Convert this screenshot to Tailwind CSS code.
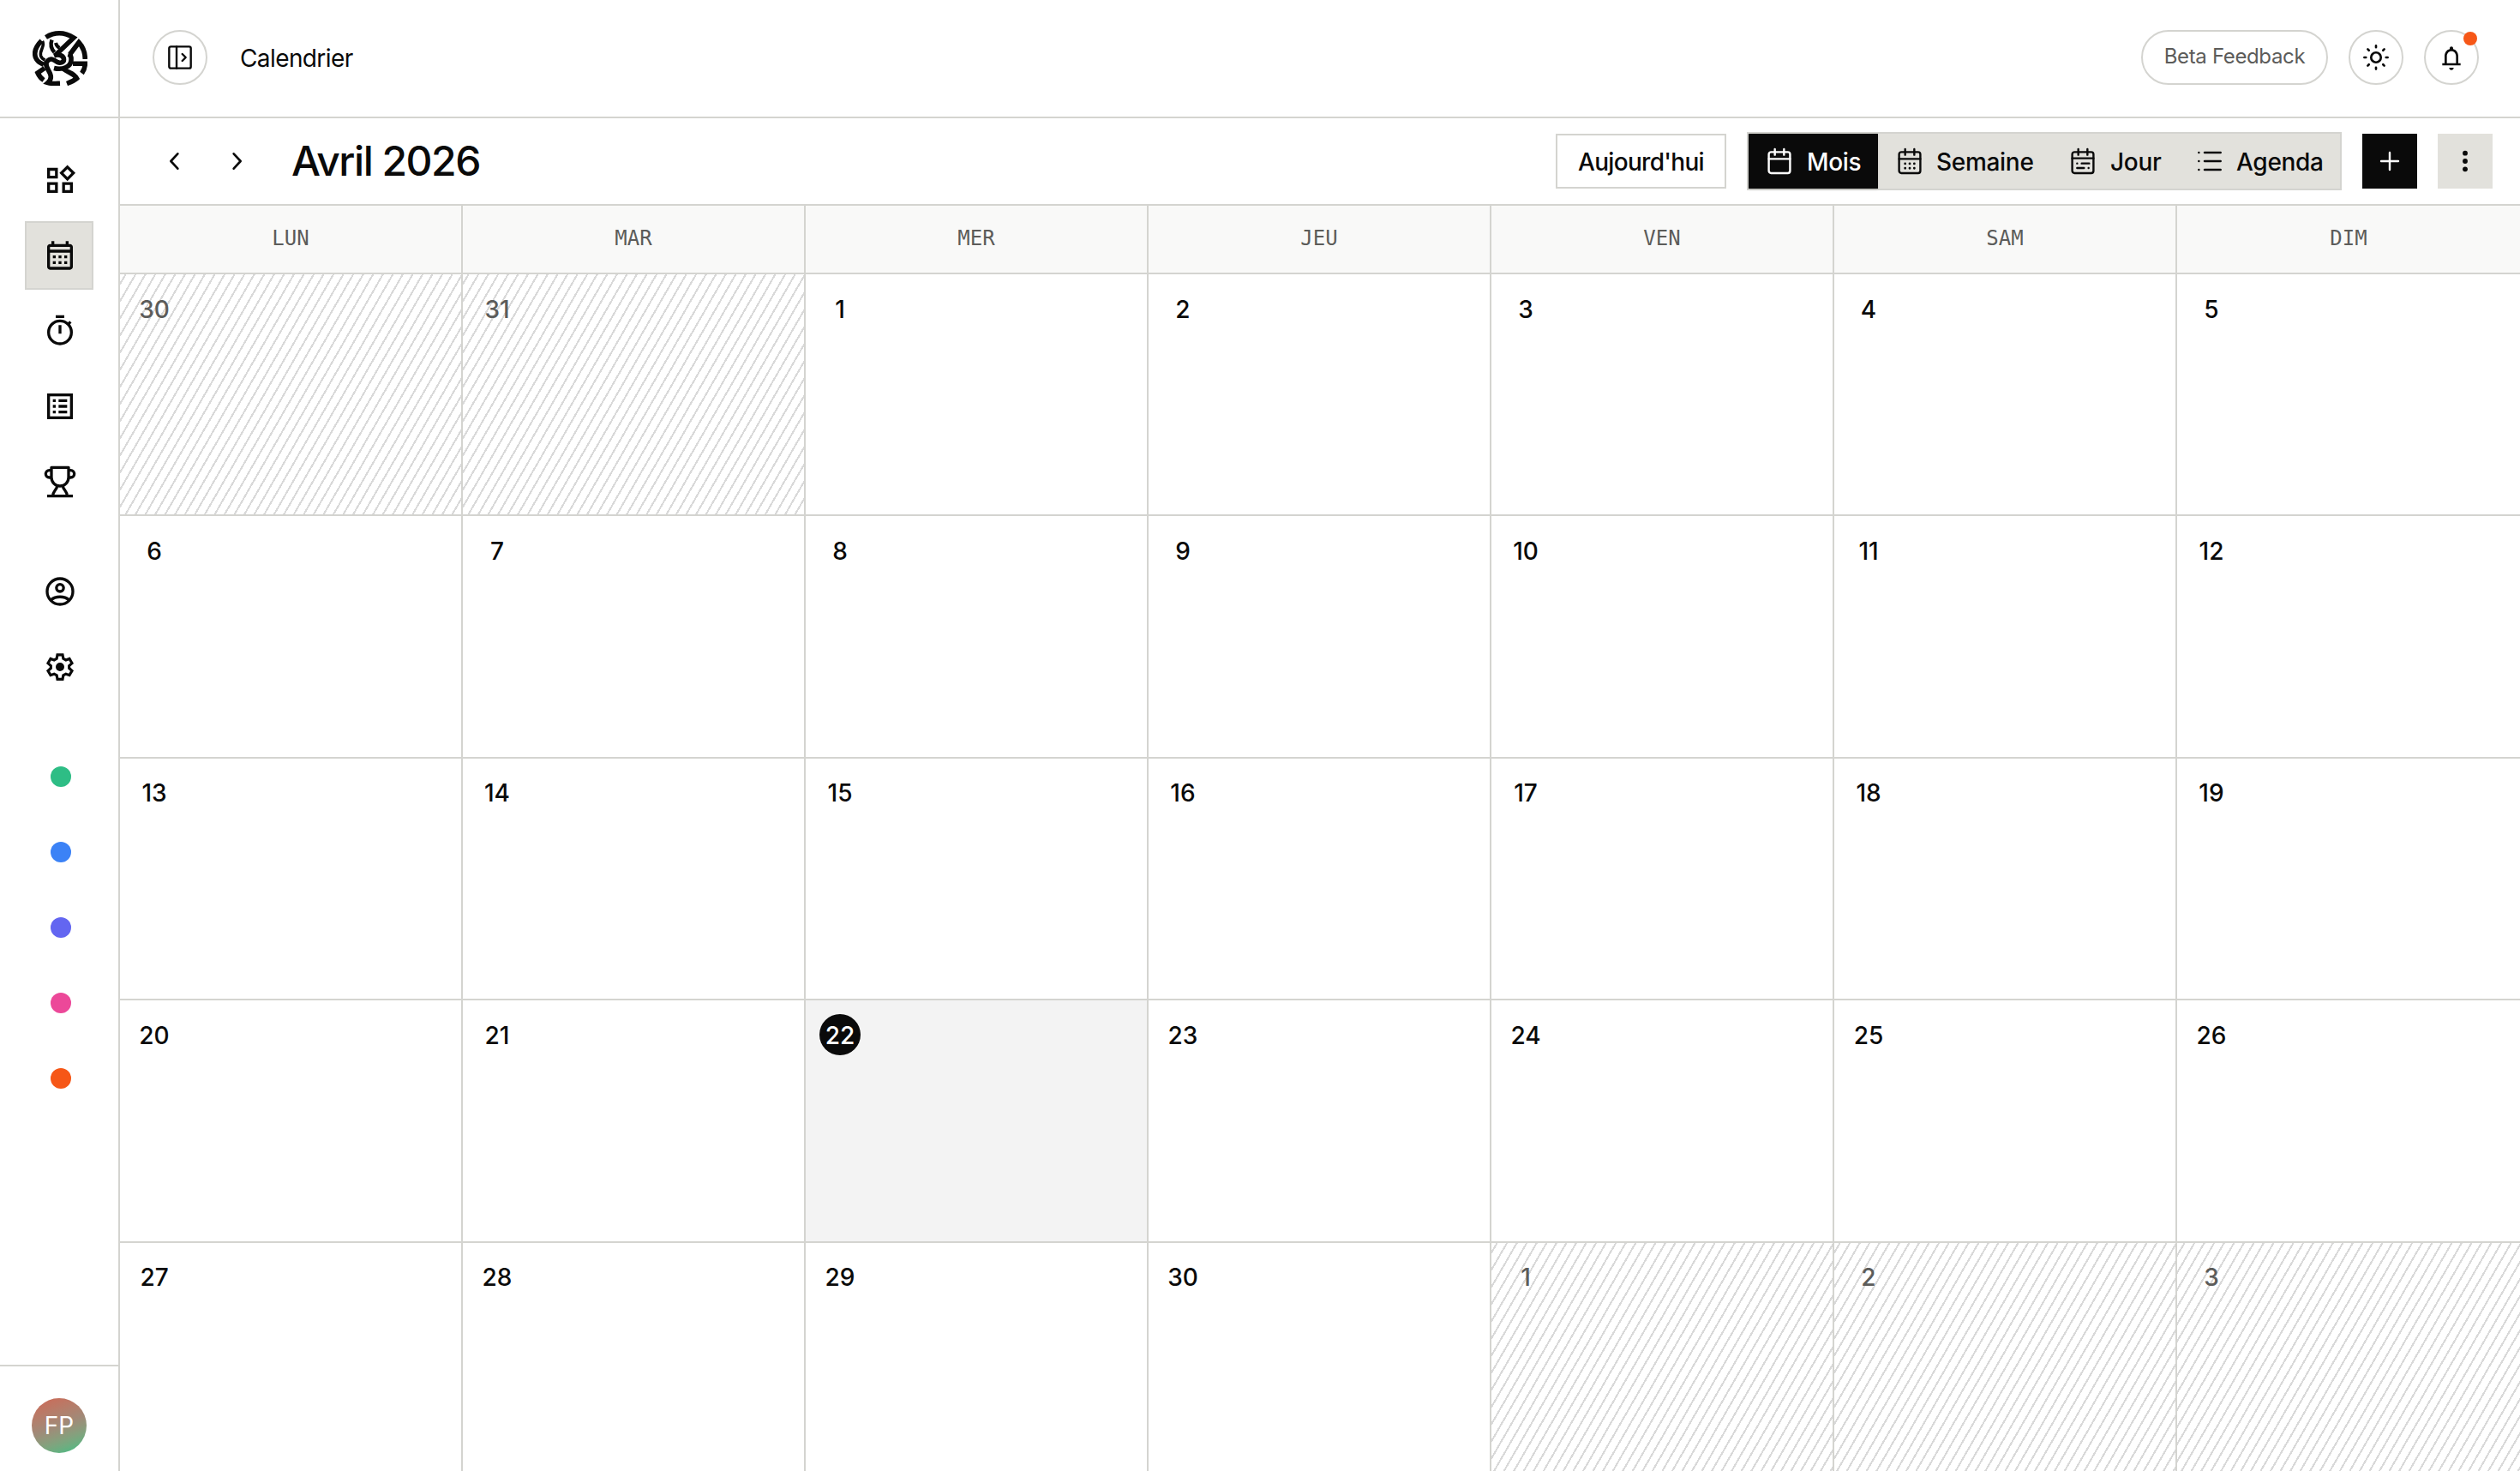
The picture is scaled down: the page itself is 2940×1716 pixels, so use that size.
<!DOCTYPE html>
<html lang="fr">
<head>
  <meta charset="UTF-8" />
  <meta name="viewport" content="width=device-width, initial-scale=1.0"/>
  <title>Calendrier</title>
  <script src="https://cdn.jsdelivr.net/npm/@tailwindcss/browser@4"></script>
</head>
<body class="h-screen flex overflow-hidden bg-white text-[#0a0a0a] font-['Inter','Liberation_Sans',sans-serif]">

<!-- Sidebar -->
<aside class="w-[140px] shrink-0 h-screen flex flex-col border-r-2 border-[#d4d4d0]">
  <a href="#" class="h-[138px] shrink-0 border-b-2 border-[#d4d4d0] flex items-center justify-center pl-0.5">
    <svg class="w-16 h-16" viewBox="0 0 64 64" fill="none" stroke="currentColor" stroke-width="5.600">
      <path d="M15.500 7.500C25 1.500 37 1 48 8L27 28" />
      <path d="M43.500 27.500L54 13.500C59 19 61.300 26 61.300 33" />
      <path d="M47 38.300H61.300C61.300 42 60 46 57.500 49.500" />
      <path d="M10.500 11.500C4 18 1 24 3.500 31C5.500 36 8 37 13 39.500" />
      <path d="M11.500 12C15 18 8 22 9.500 29C10.500 32 12 33 14.500 34" stroke-width="3.600" />
      <path d="M22.500 10.500C20.500 16 21 20 25.500 25" stroke-width="4.500" />
      <path d="M27 14C28 18 29.500 19 31.500 20" stroke-width="4" />
      <path d="M25 29C31 26.500 36.500 29 36.500 33.500C36.500 37 32 38 29 36.500C24 33 21 31.500 17.500 35C13 39 18.500 45 20.500 50C22 54 21 58 18 60.500C23 62 27 61.500 32 61.300" />
      <path d="M25 43.500C35 46 44.500 42 45 34.500C45.500 30 44.500 28 41.500 27" />
      <path d="M35 43.500C42 50 47 48 51.500 55.500C48 58.500 44 60 40 61.500" />
      <path d="M14 43.500L6 49C8 53.500 10 55.500 13 57.500" />
    </svg>
  </a>

  <nav class="flex-1 flex flex-col items-center pt-8">
    <a href="#" class="w-20 h-20 mb-2 flex items-center justify-center">
      <svg class="w-10 h-10 ml-0.5" viewBox="0 0 24 24" fill="none" stroke="currentColor" stroke-width="2">
        <path d="M4 4.500h5.500V10H4zM4 14.500h5.500V20H4zM14.500 14.500H20V20h-5.500z" />
        <path d="M17.200 2.900l4.200 4.200-4.200 4.200L13 7.100z" />
      </svg>
    </a>
    <a href="#" class="w-20 h-20 mb-2 flex items-center justify-center bg-[#e2e1dc] border-2 border-[#d4d4d0]">
      <svg class="w-10 h-10 ml-0.5 shrink-0" viewBox="0 0 24 24" fill="currentColor">
        <path d="M19 4h-1V2h-2v2H8V2H6v2H5c-1.110 0-2 .9-2 2v14c0 1.100.89 2 2 2h14c1.100 0 2-.9 2-2V6c0-1.100-.9-2-2-2zm0 16H5V10h14v10zm0-12H5V6h14v2zM9 14H7v-2h2v2zm4 0h-2v-2h2v2zm4 0h-2v-2h2v2zm-8 4H7v-2h2v2zm4 0h-2v-2h2v2zm4 0h-2v-2h2v2z" />
      </svg>
    </a>
    <a href="#" class="w-20 h-20 mb-2 flex items-center justify-center">
      <svg class="w-10 h-10 ml-0.5" viewBox="0 0 24 24" fill="none" stroke="currentColor" stroke-width="2">
        <circle cx="12" cy="13" r="8" />
        <path d="M9 2h6M12 8v6M17.600 7.400l1.800-1.800" />
      </svg>
    </a>
    <a href="#" class="w-20 h-20 mb-2 flex items-center justify-center">
      <svg class="w-10 h-10 ml-0.5" viewBox="0 0 24 24" fill="none" stroke="currentColor" stroke-width="2">
        <rect x="4" y="4" width="16" height="16" />
        <path d="M7 8h2M11 8h6M7 12h2M11 12h6M7 16h2M11 16h6" />
      </svg>
    </a>
    <a href="#" class="w-20 h-20 flex items-center justify-center">
      <svg class="w-10 h-10 ml-0.5" viewBox="0 0 24 24" fill="none" stroke="currentColor" stroke-width="2">
        <path d="M6 2h12v7a6 6 0 0 1-12 0zM6 4H4.500a2.500 2.500 0 0 0 0 5H6M18 4h1.500a2.500 2.500 0 0 1 0 5H18" stroke-linejoin="round" />
        <path d="M3 22h18M10 14.700c0 3-3 3.500-3 7.300M14 14.700c0 3 3 3.500 3 7.300" />
      </svg>
    </a>

    <a href="#" class="w-20 h-20 mt-12 mb-2 flex items-center justify-center">
      <svg class="w-10 h-10 ml-0.5" viewBox="0 0 24 24" fill="none" stroke="currentColor" stroke-width="2">
        <circle cx="12" cy="12" r="9" />
        <circle cx="12" cy="9.500" r="2.500" />
        <path d="M5.500 18c3.500-3 9.500-3 13 0" />
      </svg>
    </a>
    <a href="#" class="w-20 h-20 flex items-center justify-center">
      <svg class="w-10 h-10 ml-0.5" viewBox="0 0 24 24" fill="none" stroke="currentColor" stroke-width="1.900">
        <path d="M10.200 3.500h3.600l.5 2.700 1.800 1 2.500-.9 1.800 3.100-2 1.800v1.700l2 1.800-1.800 3.100-2.500-.9-1.800 1-.5 2.700h-3.600l-.5-2.700-1.800-1-2.500.9-1.800-3.100 2-1.800v-1.700l-2-1.800 1.800-3.100 2.500.9 1.800-1z" />
        <circle cx="12" cy="12" r="3" fill="currentColor" stroke="none" />
      </svg>
    </a>

    <!-- Project colours -->
    <div class="flex flex-col gap-16 mt-[76px] pl-1">
      <span class="w-6 h-6 rounded-full bg-[#2ebd85]"></span>
      <span class="w-6 h-6 rounded-full bg-[#3b82f6]"></span>
      <span class="w-6 h-6 rounded-full bg-[#6366f1]"></span>
      <span class="w-6 h-6 rounded-full bg-[#ec4899]"></span>
      <span class="w-6 h-6 rounded-full bg-[#f65717]"></span>
    </div>
  </nav>

  <div class="h-[124px] shrink-0 border-t-2 border-[#d4d4d0] flex justify-center pt-[37px]">
    <div class="w-16 h-16 rounded-full bg-linear-160 from-[#cf6655] via-[#a08a78] to-[#26c085] text-white text-[28px] flex items-center justify-center">FP</div>
  </div>
</aside>

<div class="flex-1 min-w-0 flex flex-col">
  <!-- Header -->
  <header class="h-[138px] shrink-0 border-b-2 border-[#d4d4d0] flex items-center pl-[38px] pr-12 pb-0.5">
    <button class="w-16 h-16 rounded-full border-2 border-[#d4d4d0] flex items-center justify-center">
      <svg class="w-8 h-8" viewBox="0 0 24 24" fill="none" stroke="currentColor" stroke-width="1.800" stroke-linecap="round" stroke-linejoin="round">
        <rect x="2.500" y="2.500" width="19" height="19" rx="1.500" />
        <path d="M9 2.500v19M14 9l3 3-3 3" />
      </svg>
    </button>
    <span class="ml-[38px] pt-px text-[28px] tracking-[-0.6px]">Calendrier</span>

    <div class="ml-auto flex items-center gap-6">
      <button class="h-16 w-[218px] rounded-full border-2 border-[#d4d4d0] pb-0.5 text-2xl tracking-[-0.35px] text-[#5c5c5a]">Beta Feedback</button>
      <button class="w-16 h-16 rounded-full border-2 border-[#d4d4d0] flex items-center justify-center">
        <svg class="w-8 h-8" viewBox="0 0 24 24" fill="none" stroke="currentColor" stroke-width="2" stroke-linecap="round">
          <circle cx="12" cy="12" r="4.300" />
          <path d="M12 1.800v1.400M12 20.800v1.400M1.800 12h1.400M20.800 12h1.400M4.800 4.800L5.800 5.800M18.200 18.200l1 1M4.800 19.200l1-1M18.200 5.800l1-1" />
        </svg>
      </button>
      <button class="relative w-16 h-16 rounded-full border-2 border-[#d4d4d0] flex items-center justify-center">
        <svg class="w-8 h-8" viewBox="0 0 24 24" fill="currentColor">
          <path d="M12 23c1.100 0 2-.9 2-2h-4c0 1.100.9 2 2 2zm6-6v-6c0-3.070-1.630-5.640-4.500-6.320V4c0-.83-.67-1.500-1.500-1.500s-1.500.67-1.500 1.500v.68C7.640 5.360 6 7.920 6 11v6H4v2h16v-2h-2zm-2 0H8v-6c0-2.480 1.510-4.500 4-4.500s4 2.020 4 4.500v6z" />
        </svg>
        <span class="absolute top-0 right-0 w-4 h-4 rounded-full bg-[#f65717]"></span>
      </button>
    </div>
  </header>

  <!-- Toolbar -->
  <div class="h-[102px] shrink-0 border-b-2 border-[#d4d4d0] flex items-center pl-8 pr-8">
    <button class="w-16 h-16 flex items-center justify-center">
      <svg class="w-8 h-8" viewBox="0 0 24 24" fill="none" stroke="currentColor" stroke-width="2" stroke-linecap="round" stroke-linejoin="round"><path d="M14.500 5.500L8.500 12l6 6.500" /></svg>
    </button>
    <button class="w-16 h-16 ml-2 flex items-center justify-center">
      <svg class="w-8 h-8" viewBox="0 0 24 24" fill="none" stroke="currentColor" stroke-width="2" stroke-linecap="round" stroke-linejoin="round"><path d="M9.500 5.500l6 6.500-6 6.500" /></svg>
    </button>
    <h1 class="ml-8 text-5xl font-medium tracking-[-1.5px]">Avril 2026</h1>

    <div class="ml-auto flex items-center">
      <button class="h-16 w-[199px] border-2 border-[#d4d4d0] pt-px text-[28px] font-medium tracking-[-0.7px]">Aujourd'hui</button>

      <div class="ml-6 h-[68px] flex border-2 border-[#d4d4d0] bg-[#e2e1dc] text-[28px] font-medium tracking-[-0.3px]">
        <button class="w-[151px] pl-5 flex items-center gap-4 bg-[#0a0a0a] text-white shadow-sm">
          <svg class="w-8 h-8 shrink-0" viewBox="0 0 24 24" fill="none" stroke="currentColor" stroke-width="1.800" stroke-linecap="round" stroke-linejoin="round">
            <rect x="2.700" y="4" width="18.600" height="18.500" rx="2" /><path d="M2.700 10h18.600M8 1.500v5M16 1.500v5" />
          </svg>
          <span class="pt-px">Mois</span>
        </button>
        <button class="w-[202px] pl-[21px] flex items-center gap-[15px]">
          <svg class="w-8 h-8 shrink-0" viewBox="0 0 24 24" fill="none" stroke="currentColor" stroke-width="1.800" stroke-linecap="round" stroke-linejoin="round">
            <rect x="2.700" y="4" width="18.600" height="18.500" rx="2" /><path d="M2.700 10h18.600M8 1.500v5M16 1.500v5" />
            <path d="M8 14.200h.01M12 14.200h.01M16 14.200h.01M8 18.200h.01M12 18.200h.01M16 18.200h.01" stroke-width="2.100" />
          </svg>
          <span class="pt-px">Semaine</span>
        </button>
        <button class="w-[148px] pl-[21px] flex items-center gap-4">
          <svg class="w-8 h-8 shrink-0" viewBox="0 0 24 24" fill="none" stroke="currentColor" stroke-width="1.800" stroke-linecap="round" stroke-linejoin="round">
            <rect x="2.700" y="4" width="18.600" height="18.500" rx="2" /><path d="M2.700 9.500h18.600M8 1.500v5M16 1.500v5" />
            <path d="M7 14h.01M11 14h6.500M7 18h6M17 18h.01" />
          </svg>
          <span class="pt-px">Jour</span>
        </button>
        <button class="w-[189px] pl-[21px] flex items-center gap-[15px]">
          <svg class="w-8 h-8 shrink-0" viewBox="0 0 24 24" fill="none" stroke="currentColor" stroke-width="1.900" stroke-linecap="round">
            <path d="M7.500 4.500h14M7.500 12h14M7.500 19.500h14M2.500 4.500h.01M2.500 12h.01M2.500 19.500h.01" />
          </svg>
          <span class="pt-px">Agenda</span>
        </button>
      </div>

      <button class="ml-6 w-16 h-16 bg-[#0a0a0a] text-white flex items-center justify-center">
        <svg class="w-8 h-8" viewBox="0 0 24 24" fill="none" stroke="currentColor" stroke-width="1.800" stroke-linecap="round"><path d="M12 4.500v15M4.500 12h15" /></svg>
      </button>
      <button class="ml-6 w-16 h-16 bg-[#e2e1dc] flex items-center justify-center">
        <svg class="w-8 h-8" viewBox="0 0 24 24" fill="currentColor"><circle cx="12" cy="5" r="2.200" /><circle cx="12" cy="12" r="2.200" /><circle cx="12" cy="19" r="2.200" /></svg>
      </button>
    </div>
  </div>

  <!-- Week days -->
  <div id="weekdays" class="h-20 shrink-0 grid grid-cols-7 bg-[#f9f9f8] border-b-2 border-[#d4d4d0] font-['DejaVu_Sans_Mono',monospace] text-2xl text-[#5c5c5a]"></div>

  <!-- Month grid -->
  <div id="days" class="grid grid-cols-7 auto-rows-[282.4px] text-[28px] font-medium"></div>
</div>

<script>
  const weekdays = ['LUN', 'MAR', 'MER', 'JEU', 'VEN', 'SAM', 'DIM'];
  const today = 22;

  document.getElementById('weekdays').innerHTML = weekdays.map(day => `
    <div class="flex items-center justify-center pb-0.5 border-r-2 border-[#d4d4d0] last:border-r-0">${day}</div>
  `).join('');

  // 2 days of March, 30 of April, 3 of May
  const days = [];
  for (let i = -1; i <= 33; i++) {
    if (i < 1) days.push({ n: 31 + i, out: true });
    else if (i > 30) days.push({ n: i - 30, out: true });
    else days.push({ n: i, out: false });
  }

  document.getElementById('days').innerHTML = days.map((day, i) => {
    const isToday = !day.out && day.n === today;
    let cell = 'p-4 border-b-2 border-[#d4d4d0]';
    let num = 'w-12 h-12 pt-px rounded-full flex items-center justify-center';
    if (i % 7 !== 6) cell += ' border-r-2';
    if (day.out) {
      cell += ' bg-[repeating-linear-gradient(-60deg,transparent_0px,transparent_8px,#d9d9d9_8px,#d9d9d9_10px)]';
      num += ' text-[#5c5c5a]';
    }
    if (isToday) {
      cell += ' bg-[#f3f3f3]';
      num += ' bg-[#0a0a0a] text-white';
    }
    return `<div class="${cell}"><div class="${num}">${day.n}</div></div>`;
  }).join('');
</script>

</body>
</html>
